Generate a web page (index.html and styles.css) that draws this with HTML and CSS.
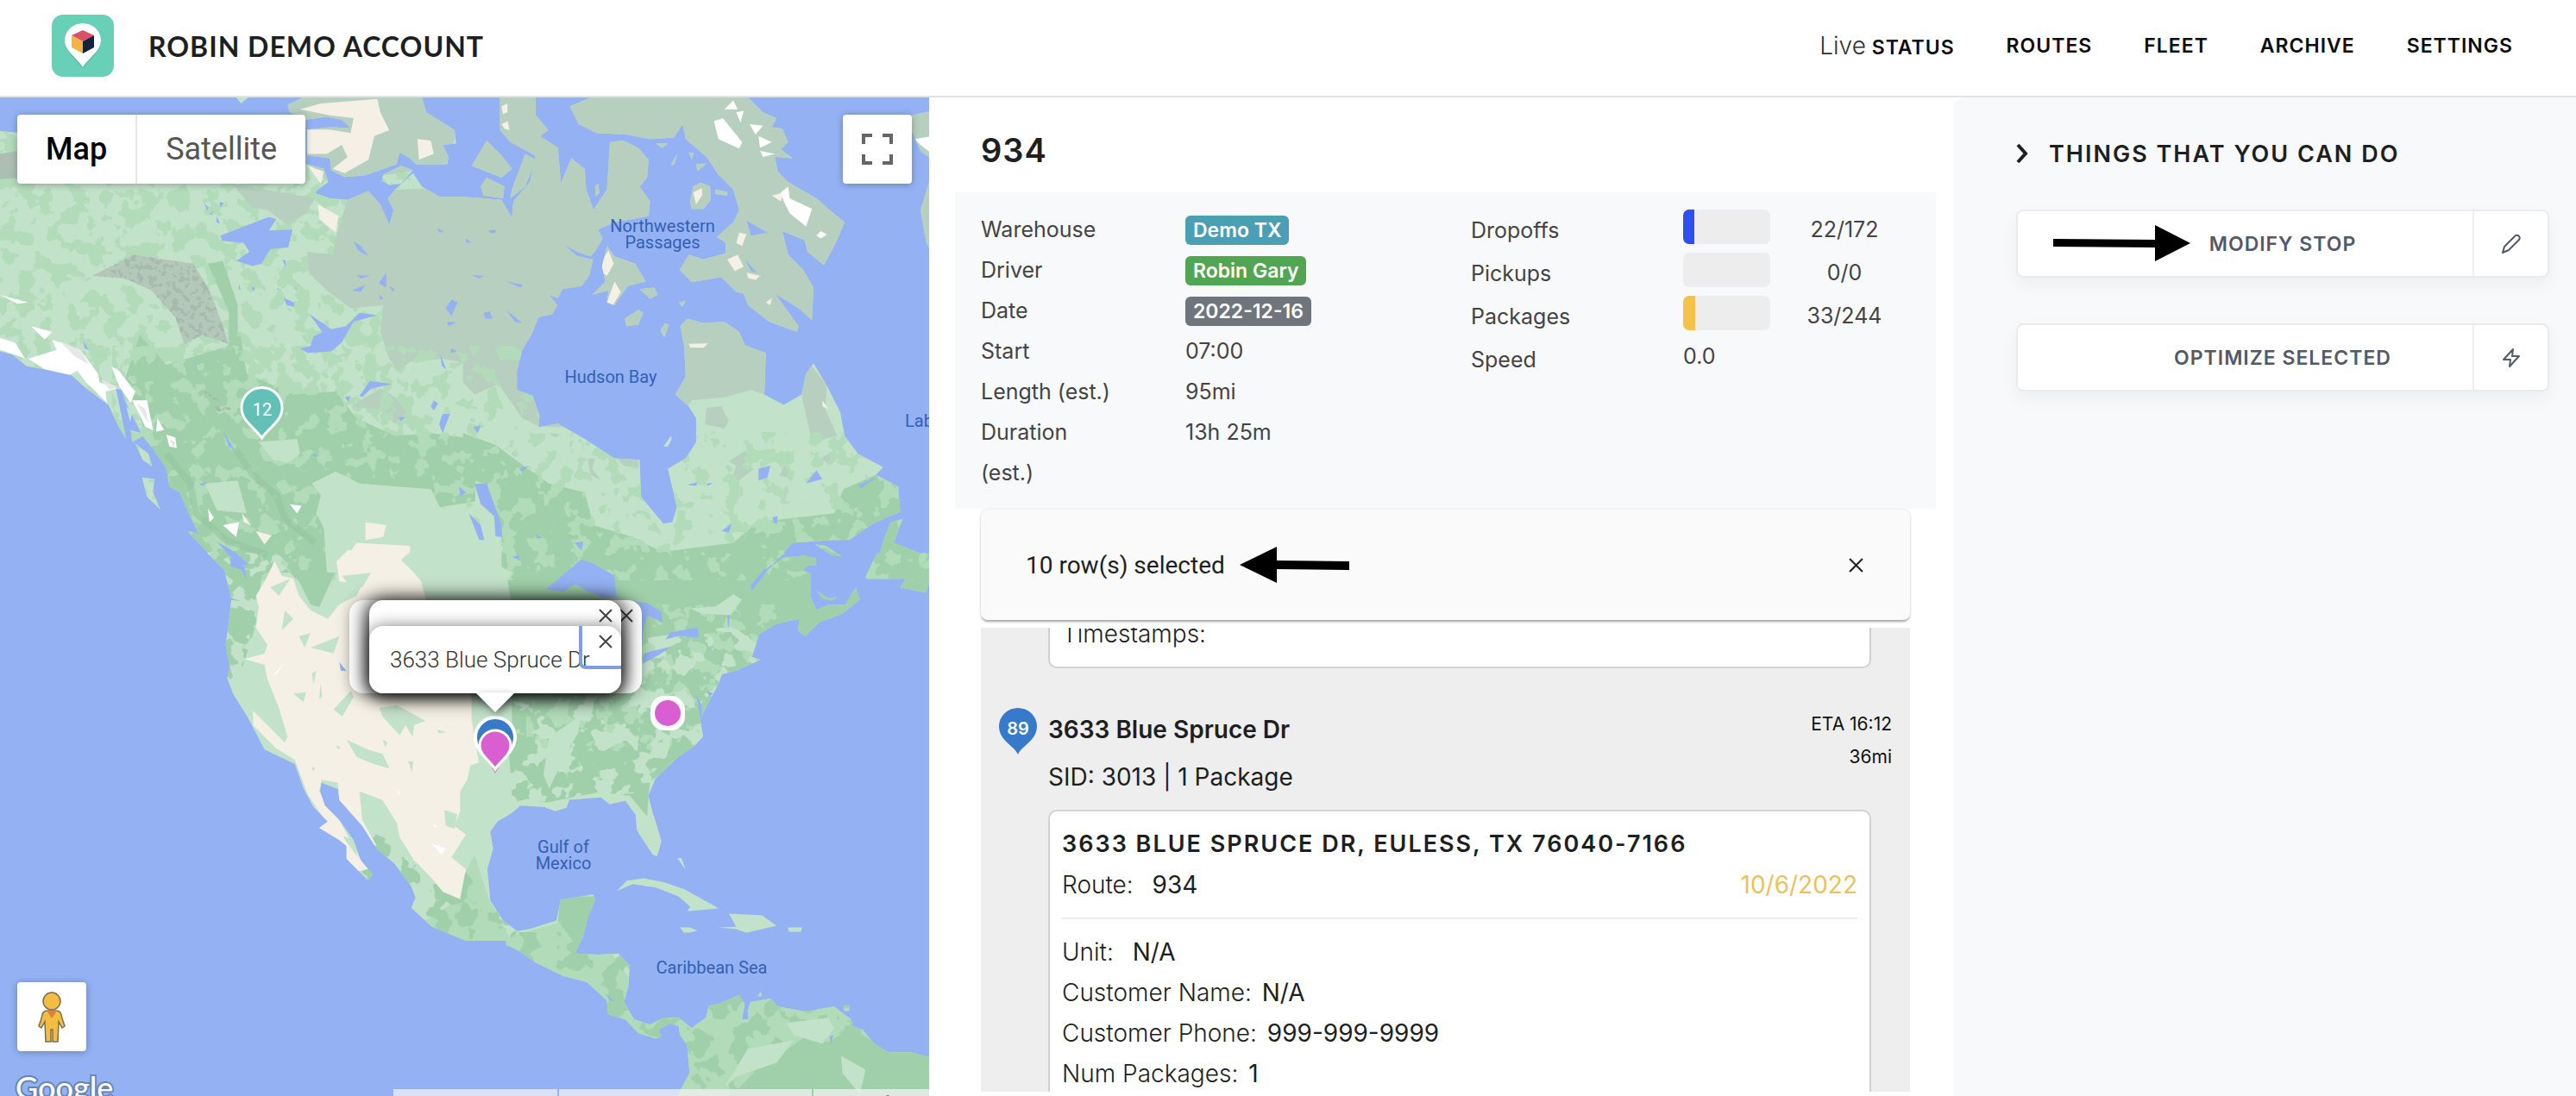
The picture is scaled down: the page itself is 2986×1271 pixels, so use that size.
FILE: index.html
```html
<!DOCTYPE html>
<html lang="en">
<head>
<meta charset="utf-8">
<title>Robin Demo Account</title>
<meta name="viewport" content="width=device-width, initial-scale=1">
<link rel="stylesheet" href="styles.css">
</head>
<body>
<header class="topbar">
  <a class="brand" href="#">
    <svg class="brand-logo" viewBox="0 0 72 72" aria-hidden="true">
      <rect width="72" height="72" rx="13" fill="#69d0b8"/>
      <path d="M36 63C30 53 15 43 15 30a21 20 0 0 1 42 0c0 13-15 23-21 33z" fill="#3f9c8a" opacity=".5"/>
      <path d="M36 61C30 51 15 42 15 30a21 20 0 0 1 42 0c0 12-15 21-21 31z" fill="#fff"/>
      <path d="M36 18l13 6-13 7-13-7z" fill="#db5069"/>
      <path d="M23 24l13 7v14l-13-7z" fill="#f2b544"/>
      <path d="M49 24l-13 7v14l13-7z" fill="#16233c"/>
    </svg>
    <span class="brand-name">ROBIN DEMO ACCOUNT</span>
  </a>
  <nav class="nav">
    <a href="#"><span class="nav-live">Live</span> STATUS</a>
    <a href="#">ROUTES</a>
    <a href="#">FLEET</a>
    <a href="#">ARCHIVE</a>
    <a href="#">SETTINGS</a>
  </nav>
</header>

<main class="layout">
  <section class="map" aria-label="Route map">
    <svg class="map-canvas" viewBox="0 112 1077 1159" preserveAspectRatio="xMinYMin slice">
      <defs>
        <filter id="speckLight" x="0" y="0" width="100%" height="100%" color-interpolation-filters="sRGB">
          <feTurbulence type="fractalNoise" baseFrequency=".045" numOctaves="3" seed="7"/>
          <feColorMatrix values="0 0 0 0 .765  0 0 0 0 .886  0 0 0 0 .792  30 0 0 0 -16.2"/>
          <feComposite in2="SourceGraphic" operator="in"/>
        </filter>
        <filter id="speckMid" x="0" y="0" width="100%" height="100%" color-interpolation-filters="sRGB">
          <feTurbulence type="fractalNoise" baseFrequency=".05" numOctaves="3" seed="21"/>
          <feColorMatrix values="0 0 0 0 .698  0 0 0 0 .859  0 0 0 0 .729  0 30 0 0 -15.6"/>
          <feComposite in2="SourceGraphic" operator="in"/>
        </filter>
        <filter id="speckSparse" x="0" y="0" width="100%" height="100%" color-interpolation-filters="sRGB">
          <feTurbulence type="fractalNoise" baseFrequency=".05" numOctaves="3" seed="5"/>
          <feColorMatrix values="0 0 0 0 .698  0 0 0 0 .859  0 0 0 0 .729  0 30 0 0 -17"/>
          <feComposite in2="SourceGraphic" operator="in"/>
        </filter>
        <filter id="speckDark" x="0" y="0" width="100%" height="100%" color-interpolation-filters="sRGB">
          <feTurbulence type="fractalNoise" baseFrequency=".04" numOctaves="3" seed="3"/>
          <feColorMatrix values="0 0 0 0 .627  0 0 0 0 .816  0 0 0 0 .667  0 0 30 0 -15.8"/>
          <feComposite in2="SourceGraphic" operator="in"/>
        </filter>
        <filter id="ridge" x="0" y="0" width="100%" height="100%" color-interpolation-filters="sRGB">
          <feTurbulence type="fractalNoise" baseFrequency=".05" numOctaves="2" seed="12"/>
          <feColorMatrix values="0 0 0 0 .65  0 0 0 0 .73  0 0 0 0 .68  0 20 0 0 -10.8"/>
          <feComposite in2="SourceGraphic" operator="in"/>
        </filter>
        <clipPath id="land">
          <path transform="translate(0 112) scale(.3444)" d="M0 113L500 160 1034 225 1090 240 1105 285 1070 310 1060 322 1110 340 1170 345 1240 315 1280 360 1310 430 1325 380 1305 340 1330 310 1390 255 1420 300 1480 335 1575 335V1575H830L740 1500 670 1470 635 1400 605 1330 570 1310 560 1250 520 1190 480 1140 440 1060 400 980 420 1050 430 1090 355 1028 290 980 240 935 150 915 90 905 40 865 0 855z"/>
          <path transform="translate(0 112) scale(.3444)" d="M968 25L1020 0H1420L1435 50 1530 110 1535 155 1490 160 1510 200 1505 225 1400 225 1380 205 1345 185 1335 225 1230 262 1160 268 1115 245 1110 205 1034 195V108L1110 100 1180 103 1150 75 1100 65 1030 75 975 50zM1285 280L1290 260 1350 230 1390 245 1350 290 1310 295zM478 1280L520 1285 515 1330 540 1388 495 1345zM630 1460L690 1475 740 1500 830 1575H740zM365 1035L410 1060 425 1150 400 1110zM425 1040L445 1060 435 1110zM440 1120L490 1135 445 1160zM455 1165L500 1200 512 1243 480 1220zM795 0H835L812 20z"/>
          <path transform="translate(540 112) scale(.3444)" d="M-10 335L60 340 120 345 155 405 160 350 215 285 235 195 310 170 320 290 355 205 400 240 405 310 430 378 475 310 485 150 530 145 580 170 615 210 610 270 585 300 620 350 615 400 500 420 445 445 460 475 440 510 420 535 375 520 330 495 375 535 428 545 415 600 390 635 325 645 310 675 280 665 308 700 290 730 245 740 220 800 190 850 172 920 172 985 225 1005 248 1070 245 1110 310 1098 400 1150 500 1215 585 1220 590 1345 665 1435 695 1430 710 1380 680 1250 740 1215 775 1160 775 1080 750 1040 705 1000 740 940 735 840 722 770 745 745 800 760 870 755 920 790 940 835 1010 860 1005 1000 1070 1035 1130 1000 1145 930 1170 895 1215 970 1260 1060 1275 1140 1320 1200 1405 1245 1380 1270 1455 1310 1462 1395 1370 1435 1290 1490 1230 1490 1100 1500 1030 1575H-10z"/>
          <path transform="translate(540 112) scale(.3444)" d="M350 30L420 0H950L1000 50 1045 70 1030 100 1065 105 1085 150 1060 175 1100 205 1040 200 1050 250 1085 285 1180 340 1220 375 1275 420 1245 490 1205 565 1150 520 1140 480 1065 450 1085 530 1135 580 1170 640 1165 750 1120 710 1040 660 1120 770 1115 790 1020 755 950 700 935 660 910 655 860 605 760 622 720 580 750 530 800 545 875 525 875 490 845 470 900 420 920 380 900 310 850 260 810 200 740 140 730 90 700 135 620 140 540 125 440 120 380 90z"/>
          <path transform="translate(540 112) scale(.3444)" d="M475 500L500 535 570 560 605 620 545 635 500 700 475 690 480 650 425 665 470 620 458 570zM585 645L635 640 645 665 620 678zM535 745L580 715 597 725 580 765 540 770zM655 785L670 760 683 765 668 808zM755 350L765 300 790 287 822 300 825 345 800 375 760 375zM115 0H235V60L278 110 250 130 310 170 240 200 150 150 115 110zM20 230L70 145 120 195 155 240 120 270zM50 300L70 270 130 300 125 340 60 330zM200 190L235 210 200 300 150 340 155 310zM435 300L445 290 450 320 437 335zM1500 110V60L1570 45V210L1530 180zM1530 380L1570 250V530L1550 490zM665 1175L690 1140 693 1150 680 1175zM717 690L740 685 728 705zM1380 1575L1410 1480 1430 1430 1470 1420 1440 1500 1530 1535V1575zM1175 1505L1210 1510 1265 1545 1230 1540zM1030 1575L1100 1545 1175 1550 1180 1575zM690 225L712 190 700 228zM775 225L810 222 780 248zM840 310L880 318V330L840 325zM640 155L680 155 660 170zM750 185L768 187 760 208z"/>
          <path transform="translate(180 640) scale(.33333)" d="M180 0L240 60 265 160 255 250 245 320 260 400 250 435 270 490 320 570 380 685 485 735 515 820 550 885 600 935 570 957 640 1000 665 1020V1065L740 1140 757 1120 715 1070 690 1000 640 930 590 880 573 830 578 800 635 822 640 860 720 950 770 1030 830 1080 890 1160 905 1200 890 1235 960 1300 1080 1350H1355V1300L1265 1320 1210 1280 1165 1210 1155 1100 1175 1030 1165 970 1190 935 1240 905 1270 880 1355 885V0z"/>
          <path transform="translate(600 640) scale(.33333 .4024)" d="M0 0V722L90 732 130 745 170 735 180 712 290 705 320 725 375 715 410 755 415 800 470 870 485 875 500 830 470 750 455 700 480 650 555 590 610 560 645 530 635 480 640 470 665 430 700 375 710 350 760 340 845 308 815 300 840 235 900 205 980 190 975 225 1000 240 1050 200 1130 175 1190 135 1175 100 1140 150 1080 150 1040 165 1020 130V60L990 50 1040 20 1000 8 920 15 870 50 810 110 860 50 930 0z"/>
          <path transform="translate(600 640) scale(.33333 .4024)" d="M0 1145L60 1180 160 1220 240 1237 310 1290 315 1330 375 1345 420 1385 480 1400 500 1395 490 1375 530 1355 560 1365 565 1390 590 1420 598 1500 550 1575H1440V1455L1370 1440 1290 1440 1240 1415 1200 1375 1165 1365 1160 1345 1100 1308 1000 1322 905 1308 880 1285 810 1295 800 1320 803 1345 780 1345 790 1300 770 1275 700 1300 665 1305 655 1340 605 1370 560 1340 510 1340 460 1360 405 1345 370 1295 385 1250 390 1190 350 1155 280 1158 200 1155 225 1110 245 1050 270 1000 262 985 150 1000 135 1060 40 1085 -40 1095V1130zM345 975L380 945 440 938 510 950 580 970 700 1025 590 1033 600 1020 560 990 480 965 400 955zM695 1080L760 1078 735 1040 850 1045 900 1075 795 1095 760 1085zM565 1080L600 1080 625 1090 580 1097zM940 1080H990L985 1092H943zM1210 70L1250 0H1440V60L1420 115 1330 100 1350 75 1215 75zM1040 110L1080 130 1110 128 1095 138 1060 132zM555 880L570 880 585 915zM1135 1305H1153V1320H1135zM835 1278L845 1265 850 1278z"/>
        </clipPath>
      </defs>

      <rect y="100" width="1077" height="1200" fill="#94b2f3"/>
      <g clip-path="url(#land)">
        <rect y="100" width="1077" height="1200" fill="#c3e2ca"/>
        <rect y="112" width="480" height="560" filter="url(#speckMid)"/>

        <!-- northern tundra -->
        <g transform="translate(0 112) scale(.3444)" fill="#b7cfbe">
          <path d="M1130 470L1170 345 1240 315 1600 300V900L1490 880 1380 890 1340 920 1310 880 1280 790 1290 700 1180 710 1100 650 1040 590 1035 520 1120 530zM780 290L1060 340 1030 390 970 430 900 380 850 370zM960 0H1440L1540 110 1500 230 1110 290 1020 200z"/>
          <path fill="#adbfb3" d="M0 190L60 180 80 270 0 275z"/>
          <path d="M1180 1040L1280 980 1330 1010 1370 1060 1330 1100 1280 1050z"/>
        </g>
        <path transform="translate(540 112) scale(.3444)" fill="#b7cfbe" d="M-10 0H1570V850H1010L1005 1000 960 985 870 1010 760 1020 700 1110 250 1110 190 1080 110 965 30 1000-10 960zM1130 1000L1145 880 1215 970 1210 1050 1250 1140 1165 1160z"/>
        <path transform="translate(540 112) scale(.3444)" fill="#b7cfbe" d="M810 1045L860 1040 885 1090 870 1115 805 1100zM885 1225L940 1190 960 1215 930 1240 970 1250 920 1290 900 1270 910 1240zM1070 1240L1100 1260 1095 1280 1055 1275zM1195 1215L1220 1200 1250 1215 1225 1240zM410 1215L435 1215 425 1250 455 1290 420 1270zM510 1215L580 1220 580 1248 530 1240zM280 1130L320 1135 300 1145z"/>

        <!-- boreal forest -->
        <g fill="#a0d0aa">
          <path transform="translate(0 112) scale(.3444)" d="M560 900L760 840 810 800 830 930 990 1000 1130 990 1200 1080 1330 1140 1450 1130 1600 1150V1360L1480 1380 1450 1320 1330 1310 1210 1300 1130 1260 1050 1300 1080 1340 1065 1400 1090 1450 1100 1600H700L600 1400 500 1150 420 950 470 800zM700 560L750 550 800 700 800 850 770 850 770 720z"/>
          <path transform="translate(540 112) scale(.3444)" d="M-10 1130L100 1170 180 1230 280 1300 400 1330 430 1440 560 1480 660 1530 900 1500 980 1430 1240 1400 1270 1320 1380 1270 1480 1300 1570 1450V1600H120V1460L60 1300-10 1280z"/>
          <path transform="translate(180 640) scale(.33333)" d="M170 0H640L620 80 570 190 540 180 500 100 430 30 370 80 350 250 300 410 260 440 230 400zM1210 0H1360V180H1240L1225 100 1250 60zM1240 830L1230 700 1300 640 1360 640V840L1260 865z"/>
          <path transform="translate(600 640) scale(.33333 .4024)" d="M-20 0H1440V330H850L700 420 650 540 460 660 450 760 390 700 280 690 100 720-20 700zM1440 1380V1600H700L900 1450 1000 1395 1160 1370z"/>
        </g>
        <path filter="url(#speckSparse)" d="M130 400H630V660H130z"/>
        <path filter="url(#speckSparse)" d="M560 500H1077V672H560z"/>
        <path filter="url(#speckMid)" d="M610 700H900V870H610z"/>
        <path filter="url(#speckLight)" d="M560 750L740 740 890 720V900L560 940z"/>
        <path filter="url(#speckLight)" d="M170 640H340V900H170z"/>
        <path fill="#b2dbba" d="M470 1080L520 1050 550 990 566 1040 590 1085 680 1060 740 1150 860 1210V1290H470z"/>
        <path fill="#b2dbba" d="M790 1140H1077V1290H780z"/>
        <path filter="url(#speckDark)" d="M420 960L540 1010 600 1080H1077V1271H480L400 1010z"/>
        <path transform="translate(600 640) scale(.33333 .4024)" fill="#a0d0aa" d="M150 990H280L220 1150 140 1060z"/>
        <path transform="translate(600 640) scale(.33333 .4024)" fill="#a0d0aa" d="M700 1600L820 1500 1000 1395 1080 1410 1160 1370 1300 1440H1440V1600z"/>
        <path transform="translate(600 640) scale(.33333 .4024)" fill="#c3e2ca" d="M720 1540L800 1430 960 1405 900 1470 760 1510zM935 1355L1080 1340 1100 1370 1060 1415 960 1390zM1125 1450L1210 1490 1190 1560 1130 1500zM410 755L480 760 500 850 480 880 420 810zM600 160L690 155 750 120 780 135 740 180 640 175zM110 530L220 470 210 520 160 590 110 680 90 640z"/>

        <!-- mountains -->
        <path transform="translate(0 112) scale(.3444)" fill="#b3c8b9" d="M310 600L450 530 650 560 700 640 740 740 770 830 680 800 620 830 590 740 510 650 420 610z"/>
        <path transform="translate(0 112) scale(.3444)" filter="url(#ridge)" d="M310 600L450 530 650 560 700 640 740 740 770 830 680 800 620 830 590 740 510 650 420 610zM680 980L780 1050 740 1070z"/>
        <path transform="translate(0 112) scale(.3444)" fill="none" stroke="#93c49f" stroke-width="22" opacity=".6" d="M790 1180L850 1270 930 1340 960 1420 1060 1500M560 1200L640 1300 660 1400 760 1490 900 1540"/>

        <!-- prairie -->
        <path transform="translate(0 112) scale(.3444)" fill="#c3e2ca" d="M1050 1300L1130 1260 1210 1300 1330 1310 1450 1320 1480 1380 1568 1410 1660 1460 1690 1520 1670 1600H1100L1090 1450 1065 1400 1080 1340zM870 1160L1000 1150 1010 1200 970 1230 920 1220zM690 1300L800 1290 830 1400 730 1390z"/>
        <path transform="translate(180 640) scale(.33333)" fill="#c3e2ca" d="M780-20H1210L1190 40 1240 70 1200 140H900z"/>

        <!-- desert -->
        <g fill="#f4f0e5">
          <path transform="translate(180 640) scale(.33333)" d="M415 30L440 80 480 90 500 150 540 200 600 230 640 180 700 150 720 110 640 100 630 30 670-10 780-10 850 20 900 70 925 100 950 200 1100 500 1100 580 1125 730 1095 740 1085 790 1060 830 1060 900 1040 950 1080 980 1030 1060 1080 1100 1060 1205 1000 1180 960 1130 900 1070 850 990 840 940 790 860 710 830 720 930 770 1020 740 1010 640 870 635 800 578 790 570 830 640 930 715 1070 740 1100 700 1110 640 1030 560 970 590 930 530 840 485 720 420 680 340 600 340 550 400 610 450 660 460 640 430 540 390 440 380 390 310 370 380 350 390 320 350 260 360 190 350 150 380 100z"/>
          <path transform="translate(0 112) scale(.3444)" d="M1230 1430L1300 1440 1290 1480 1230 1490zM1150 1575L1200 1500 1380 1510 1380 1530 1330 1575zM860 1460L915 1475 890 1505zM815 1400L845 1440 820 1430zM1010 40L1080 20 1270 5 1280 50 1310 110 1260 130 1240 210 1160 255 1120 240 1170 200 1150 160 1100 190H1030V108H1110L1180 120 1190 70 1110 60zM1070 360L1140 400 1130 455 1075 410zM1035 230L1090 250 1080 290zM1405 140L1450 145 1460 190 1410 210z"/>
          <path transform="translate(540 112) scale(.3444)" d="M460 590L458 550 480 515 498 560 475 600zM475 690L500 620 522 655 495 700zM765 320L795 305 795 330 775 360zM880 545L915 530 935 570 905 585zM910 490L920 455 945 460 930 500zM945 590L990 600 975 615 950 608zM1010 690L1030 675 1025 700zM750 830L815 828 800 843 755 842zM1030 330L1070 320 1060 350zM120 30L140 20V50L125 55zM120 90L140 80 148 110 130 105zM1200 1020L1220 1050 1200 1040z"/>
        </g>
        <path transform="translate(180 640) scale(.33333)" fill="#c3e2ca" d="M665 650L740 685 790 700 815 750 760 735 700 710zM780 540L840 530 940 585 900 600 895 640 870 600 850 635 790 570zM480 490L525 485 515 520zM545 420L560 410 550 460zM575 455L580 500 570 510zM620 545L680 480 690 500 650 570zM880 725H897L893 765zM1005 895L1050 910 1040 960 1010 950zM400 120L470 90 430 150zM450 200L480 230 440 270zM500 290L540 280 520 330zM540 330L640 290 620 350zM650 80L750 70 720 120 670 110zM980 615L1015 625 985 628zM790 650L808 660 800 675zM545 745L557 750 548 760zM630 670L645 678 635 685zM655 985L685 1000 705 1060 660 1000z"/>

        <!-- snow -->
        <g transform="translate(0 112) scale(.3444)" fill="#fff">
          <path d="M95 880L190 850 175 815 270 850 330 930 335 960 395 980 355 990 360 1028 290 960 260 920 230 938 150 915zM0 810L50 825 85 880 60 870 0 850zM105 770L175 790 150 815zM375 905L400 920 455 990 440 1030 400 970zM445 1020L495 1020 515 1120 490 1110zM560 1135L590 1145 595 1180 570 1175zM530 1080L552 1120 525 1125zM0 665L95 690 60 695zM750 1440L805 1430 795 1480zM700 1385L720 1415 705 1430zM975 1370L1015 1375 1000 1400z"/>
          <path fill="#e6e8e7" d="M200 820L270 850 300 900 250 870zM340 950L395 975 370 985zM460 1030L490 1050 500 1100zM570 1150L590 1160 585 1180z"/>
        </g>
        <g transform="translate(540 112) scale(.3444)" fill="#fff">
          <path d="M835 80L865 70 930 150 920 172 850 140zM1070 350L1060 320 1085 300 1090 340 1165 375 1145 435 1090 390zM870 40L900 10 915 40zM910 50L935 45 925 85zM955 90L1000 95 975 125zM985 130L1030 150 990 170zM990 180L1040 190 1000 200zM1180 465L1195 450 1215 462 1195 475zM1510 140L1570 130V190L1530 160z"/>
        </g>
        <path transform="translate(180 640) scale(.33333)" fill="#fff" d="M445 388L425 418 405 432zM840 818L852 842 845 840zM960 1010L1010 1030 995 1050zM968 945L982 950 972 955z"/>
      </g>

      <!-- lakes and inlets -->
      <g fill="#94b2f3">
        <path transform="translate(0 112) scale(.3444)" d="M742 465L905 402 930 410 905 448 985 445 970 505 910 510 880 560 850 568 795 550 840 520 820 490 748 483zM1040 728L1115 780 1165 770 1210 725 1270 733 1190 755 1150 825 1115 855 1035 860 1010 845 1045 838 1055 805 1085 790zM1210 1005L1245 955 1320 965 1250 980 1220 1008zM955 675L990 690 990 705 965 700zM1500 710L1520 680 1540 690 1520 735zM1505 755L1535 757 1510 770zM685 355L702 370 698 380zM738 352L754 355 742 370zM705 395L718 380 712 395zM730 400L740 425 728 420zM1190 485L1215 500 1240 535 1205 515zM1200 598L1245 600 1215 610zM1275 625L1300 590 1300 640zM1185 650L1230 630 1215 655zM850 635L860 648H848zM805 630L810 648 803 645zM935 640L940 647H932zM1310 635L1328 645 1322 655zM1275 665L1290 675 1280 683zM950 545L962 550 960 570zM990 640L1003 645H993zM1470 440L1495 450 1480 455zM1460 1020L1475 1030 1460 1055 1450 1040zM1490 1065L1515 1065 1490 1130 1478 1100zM1340 1078L1365 1075 1350 1090zM1160 1010L1180 1005 1172 1025zM750 1120L790 1188 770 1175zM1045 1200L1080 1205 1060 1208zM1480 860L1502 915 1488 905zM1520 845L1538 855 1515 860zM655 880L665 940 658 910zM670 1300L700 1298 680 1308zM1545 1310L1568 1330 1550 1345zM390 980L410 985 440 1100 425 1150zM280 820L300 850 285 845zM730 1495L790 1530 840 1575 800 1575z"/>
        <path transform="translate(540 112) scale(.3444)" d="M30 1300L70 1300 120 1440 122 1480 100 1478 95 1410 50 1370zM10 1400L50 1440 62 1490 45 1490zM135 620L190 630 185 640zM20 598L62 600 45 610zM60 725L80 720 90 745 65 745zM75 448L102 445 100 455 85 458zM135 715L190 760 165 755zM0 475L20 490 0 488zM745 1305L780 1295 775 1308zM985 1250L1025 1240 1015 1280 985 1290zM1145 1300L1180 1255 1200 1285zM860 1460L895 1435 885 1465zM1030 1415L1050 1410 1045 1440zM365 1500L395 1495 390 1525zM180 1250L210 1240 190 1262zM25 1110L50 1105 40 1130zM945 415L1015 455 960 465zM940 545L980 590 960 585zM235 1470L258 1482 240 1485zM810 1300L832 1298 815 1308zM1320 1305L1390 1275 1330 1315z"/>
        <path transform="translate(600 640) scale(.33333 .4024)" d="M100 105L220 20 260 30 335 65 345 130H300L240 110 200 90 160 112zM360 135L450 145 500 170 505 200 450 180 435 230 430 290 360 260zM435 320L440 290 460 285 535 270 490 295zM515 250L530 230 625 215 630 245 560 240zM730 180L738 180 732 225zM620 405L640 440 638 490 628 440zM660 398L680 405 668 415zM305 1270L340 1295 320 1290zM1085 1395L1098 1390 1090 1415zM810 95L815 110 870 50 860 45z"/>
        <path transform="translate(180 640) scale(.33333)" d="M640 380L665 412 645 410zM1240 15L1265 8 1265 25zM265 15L310 50 318 95 300 60 260 45zM263 158L300 168 263 164z"/>
      </g>

      <g class="sea-names">
        <text x="768" y="268">Northwestern</text>
        <text x="768" y="287">Passages</text>
        <text x="708" y="443">Hudson Bay</text>
        <text x="1108" y="494">Labrador Sea</text>
        <text x="653" y="988">Gulf of</text>
        <text x="653" y="1007">Mexico</text>
        <text x="825" y="1128">Caribbean Sea</text>
      </g>

      <g>
        <path d="M303.500 507C297 496 280 488 280 472a23.500 23.500 0 0 1 47 0c0 16-17 24-23.500 35z" fill="#62c0b7" stroke="#fff" stroke-width="3"/>
        <text class="pin-number" x="304" y="481">12</text>
        <path d="M574 890C567 879 551 870 551 854a23 23 0 0 1 46 0c0 16-16 25-23 36z" fill="#367ac9" stroke="#fff" stroke-width="4"/>
        <path d="M570 889h8l-4 7z" fill="#d082c8"/>
        <path d="M574 891C569 882 556 875 556 864a18 18 0 0 1 36 0c0 11-13 18-18 27z" fill="#d95fd0" stroke="#fff" stroke-width="3"/>
        <rect x="754" y="806" width="40" height="40" rx="16" fill="#fff"/>
        <circle cx="774" cy="826" r="15" fill="#d95fd0"/>
      </g>
      <g class="google-mark"><text x="18" y="1274">Google</text></g>
    </svg>

    <div class="info-window info-back">
      <button class="info-close" aria-label="Close"><svg viewBox="0 0 16 16"><path d="M1 1l14 14M15 1L1 15"/></svg></button>
    </div>
    <div class="info-window info-middle">
      <span class="info-text">12711 Skinnker S</span>
      <button class="info-close" aria-label="Close"><svg viewBox="0 0 16 16"><path d="M1 1l14 14M15 1L1 15"/></svg></button>
    </div>
    <div class="info-window info-front">
      <span class="info-text">3633 Blue Spruce Dr</span>
      <button class="info-close focused" aria-label="Close"><svg viewBox="0 0 16 16"><path d="M1 1l14 14M15 1L1 15"/></svg></button>
    </div>
    <svg class="info-tail" viewBox="0 0 46 23" aria-hidden="true"><path d="M0 0h46L23 23z" fill="#fff"/></svg>

    <div class="map-types">
      <button class="map-type active">Map</button>
      <button class="map-type">Satellite</button>
    </div>
    <button class="map-square fullscreen" aria-label="Toggle fullscreen">
      <svg viewBox="0 0 36 36" width="36" height="36"><path d="M2 12V2h10M24 2h10v10M34 24v10H24M12 34H2V24" fill="none" stroke="#666" stroke-width="4"/></svg>
    </button>
    <button class="map-square pegman" aria-label="Street View">
      <svg viewBox="0 0 34 60" width="34" height="60"><path d="M12 23h10c5 0 6 3 7 9l3 9-3 2-4-7-1 23h-6V45h-2v14h-6L9 36l-4 7-3-2 3-9c1-6 2-9 7-9z" fill="#f3bd42" stroke="#7a6f50" stroke-width="1.500"/><path d="M11 23h12l-6 9z" fill="#d9823a"/><circle cx="17" cy="12" r="10" fill="#f3bd42" stroke="#7a6f50" stroke-width="1.500"/></svg>
    </button>
    <div class="attribution">
      <span class="attribution-keys">Keyboard shortcuts</span>
      <span class="attribution-data">Map data ©2022 Google, INEGI</span>
      <span class="attribution-terms">Terms of Use</span>
    </div>
  </section>

  <section class="route">
    <h1 class="route-title">934</h1>
    <div class="summary">
      <dl class="facts">
        <dt>Warehouse</dt><dd><span class="tag tag-blue">Demo TX</span></dd>
        <dt>Driver</dt><dd><span class="tag tag-green">Robin Gary</span></dd>
        <dt>Date</dt><dd><span class="tag tag-grey">2022-12-16</span></dd>
        <dt>Start</dt><dd>07:00</dd>
        <dt>Length (est.)</dt><dd>95mi</dd>
        <dt>Duration (est.)</dt><dd>13h 25m</dd>
      </dl>
      <dl class="counts">
        <dt>Dropoffs</dt><dd><span class="bar"><span class="fill fill-blue" style="width:13%"></span></span><span class="count">22/172</span></dd>
        <dt>Pickups</dt><dd><span class="bar"></span><span class="count">0/0</span></dd>
        <dt>Packages</dt><dd><span class="bar"><span class="fill fill-yellow" style="width:14%"></span></span><span class="count">33/244</span></dd>
        <dt>Speed</dt><dd>0.0</dd>
      </dl>
    </div>

    <div class="selection">
      <span>10 row(s) selected</span>
      <svg class="selection-arrow" viewBox="0 0 127 42" aria-hidden="true"><path d="M0 21L43 0v16l84 1v10l-84-1v16z"/></svg>
      <button class="selection-close" aria-label="Clear selection"><svg viewBox="0 0 16 16"><path d="M1 1l14 14M15 1L1 15"/></svg></button>
    </div>

    <div class="stops">
      <div class="card card-above"><p class="field">Timestamps:</p></div>
      <div class="stop">
        <svg class="stop-pin" viewBox="0 0 44 54" role="img" aria-label="Stop 89"><path d="M22 54C17 43 0 38 0 21a22 21 0 0 1 44 0c0 17-17 22-22 33z" fill="#367ac9"/><text x="22" y="31">89</text></svg>
        <div class="stop-head">
          <h2 class="stop-name">3633 Blue Spruce Dr</h2>
          <p class="stop-sub">SID: 3013 | 1 Package</p>
        </div>
        <div class="stop-eta"><p>ETA 16:12</p><p>36mi</p></div>
      </div>
      <div class="card">
        <h3 class="card-title">3633 BLUE SPRUCE DR, EULESS, TX 76040-7166</h3>
        <p class="field field-route"><span>Route: <b>934</b></span><time>10/6/2022</time></p>
        <p class="field">Unit: <b>N/A</b></p>
        <p class="field">Customer Name: <b class="near">N/A</b></p>
        <p class="field">Customer Phone: <b class="near">999-999-9999</b></p>
        <p class="field">Num Packages: <b class="near">1</b></p>
      </div>
    </div>
  </section>

  <aside class="actions">
    <h2 class="actions-title"><svg viewBox="0 0 14 24" aria-hidden="true"><path d="M2 2l9 10-9 10"/></svg>THINGS THAT YOU CAN DO</h2>
    <button class="action">
      <svg class="action-arrow" viewBox="0 0 159 42" aria-hidden="true"><path d="M159 21L118 42V26L0 25V16l118 1V0z"/></svg>
      <span class="action-label">MODIFY STOP</span>
      <span class="action-icon"><svg viewBox="0 0 24 24"><path d="M2 22l2-7L16 3a3 3 0 0 1 5 4L9 19z"/></svg></span>
    </button>
    <button class="action">
      <span class="action-label">OPTIMIZE SELECTED</span>
      <span class="action-icon"><svg viewBox="0 0 24 24"><path d="M14 2L3 14h8l-1 8 11-12h-8z"/></svg></span>
    </button>
  </aside>
</main>
</body>
</html>
```

FILE: styles.css
```css
* { box-sizing: border-box; }

body {
  margin: 0;
  height: 100vh;
  display: flex;
  flex-direction: column;
  overflow: hidden;
  background: #fff;
  color: #1e1f21;
  font-family: Inter, "Open Sans", sans-serif;
  font-size: 25px;
}

h1, h2, h3, p, dl, dd { margin: 0; }
button { font: inherit; color: inherit; border: 0; background: none; padding: 0; cursor: pointer; }
a { color: inherit; text-decoration: none; }

/* Top bar */
.topbar {
  display: flex;
  align-items: center;
  justify-content: space-between;
  height: 113px;
  flex: none;
  padding: 0 73px 5px 60px;
  border-bottom: 2px solid #e1e4e6;
}
.brand { display: flex; align-items: center; gap: 40px; }
.brand-logo { width: 72px; height: 72px; }
.brand-name { font-family: Lato, sans-serif; font-weight: 700; font-size: 32px; letter-spacing: 1px; }
.nav { display: flex; align-items: center; gap: 60px; font-size: 23px; font-weight: 600; letter-spacing: 1px; color: #0c0c0d; }
.nav-live { font-weight: 300; font-size: 28px; letter-spacing: 0; color: #333; }

.layout {
  flex: 1;
  min-height: 0;
  display: grid;
  grid-template-columns: 1077fr 1188fr 721fr;
}

/* Map */
.map { position: relative; overflow: hidden; background: #94b2f3; font-family: Roboto, sans-serif; }
.map-canvas { display: block; width: 100%; height: 100%; }
.sea-names text { font: 20px Roboto, sans-serif; fill: #3360b5; text-anchor: middle; }
.pin-number { font: 20px Roboto, sans-serif; fill: #fff; text-anchor: middle; }
.google-mark text {
  font: 500 36px Lato, sans-serif;
  fill: #fff;
  stroke: #6784b8;
  stroke-width: 4px;
  paint-order: stroke;
}
.map-types {
  position: absolute;
  left: 20px;
  top: 20px;
  display: flex;
  height: 80px;
  border-radius: 4px;
  background: #fff;
  box-shadow: 0 1px 8px rgba(0, 0, 0, .3);
}
.map-type { padding: 0 33px; font-size: 36px; color: #565656; }
.map-type.active { font-weight: 500; color: #000; border-right: 2px solid #e8e8e8; }
.map-square {
  position: absolute;
  display: flex;
  align-items: center;
  justify-content: center;
  width: 80px;
  height: 80px;
  border-radius: 4px;
  background: #fff;
  box-shadow: 0 1px 8px rgba(0, 0, 0, .3);
}
.fullscreen { right: 20px; top: 20px; }
.pegman { left: 20px; bottom: 52px; }

.info-window {
  position: absolute;
  display: flex;
  align-items: center;
  border-radius: 16px;
  background: #fff;
  overflow: hidden;
  padding-left: 24px;
  font-weight: 300;
  font-size: 26px;
  color: #333;
}
.info-back { left: 405px; top: 583px; width: 339px; height: 108px; box-shadow: 0 2px 16px rgba(0, 0, 0, .3); }
.info-middle { left: 428px; top: 583px; width: 292px; height: 108px; box-shadow: 0 2px 22px 3px #000; }
.info-middle .info-text { padding-bottom: 22px; }
.info-front { left: 428px; top: 613px; width: 292px; height: 78px; box-shadow: 0 0 18px rgba(0, 0, 0, .5); }
.info-tail { position: absolute; left: 551px; top: 690px; width: 46px; height: 23px; filter: drop-shadow(2px 3px 4px rgba(0, 0, 0, .4)); }
.info-close {
  position: absolute;
  right: 0;
  top: 0;
  width: 49px;
  height: 50px;
  padding: 10px 10px 0 23px;
  display: flex;
}
.info-close svg { width: 16px; height: 16px; fill: none; stroke: #444; stroke-width: 2; }
.info-close.focused { border: 3px solid #7f9fdc; border-width: 0 0 4px 4px; border-radius: 0 0 0 8px; padding-left: 19px; }

.attribution { position: absolute; right: 0; bottom: -20px; display: flex; gap: 2px; font-size: 20px; color: #222; }
.attribution span { height: 28px; padding: 4px 8px; background: rgba(245, 245, 245, .7); white-space: nowrap; }

/* Route column */
.route { display: flex; flex-direction: column; min-width: 0; min-height: 0; padding: 0 21px 5px 30px; }
.route-title { padding: 36px 30px 0; height: 110px; font-size: 38px; font-weight: 600; line-height: 50px; letter-spacing: 1px; }
.summary {
  display: grid;
  grid-template-columns: minmax(0, 568fr) minmax(0, 509fr);
  padding: 20px 30px 18px;
  background: #f8f9fb;
  color: #444;
}
.facts { display: grid; grid-template-columns: 237px 1fr; line-height: 47px; }
.facts dt { padding-right: 70px; }
.facts dd, .counts dd { display: flex; align-items: center; }
.facts dd { align-self: start; height: 47px; }
.tag { padding: 0 9px; line-height: 34px; border-radius: 6px; color: #fff; font-size: 23px; font-weight: 600; }
.tag-blue { background: #4a9fb5; }
.tag-green { background: #52a552; }
.tag-grey { background: #6e757d; }
.counts { display: grid; grid-template-columns: 246px 1fr; grid-auto-rows: 40px; row-gap: 10px; align-content: start; line-height: 48px; }
.counts dd { line-height: 40px; }
.bar { display: flex; flex: none; width: 101px; height: 40px; border-radius: 7px; background: #ededed; overflow: hidden; }
.fill-blue { background: #2f50ee; }
.fill-yellow { background: #f5c24a; }
.count { flex: none; width: 172px; padding-top: 6px; text-align: center; }

.selection {
  position: relative;
  display: flex;
  align-items: center;
  flex: none;
  height: 128px;
  margin: 1px 30px 9px;
  padding: 0 54px 0 52px;
  border-radius: 8px;
  background: #fafafa;
  box-shadow: 0 3px 3px -1px rgba(0, 0, 0, .35), 0 0 3px rgba(0, 0, 0, .15);
  font-family: Roboto, sans-serif;
  font-size: 28px;
}
.selection-arrow { width: 127px; height: 42px; margin-left: 17px; }
.selection-close { margin-left: auto; display: flex; }
.selection-close svg { width: 17px; height: 17px; fill: none; stroke: #222; stroke-width: 2; }

.stops { flex: 1; min-height: 0; overflow: hidden; margin: 0 30px; padding: 0 21px; background: #eee; }
.card {
  margin: 0 24px 0 57px;
  padding: 14px 14px;
  border: 2px solid #d2d2d2;
  border-radius: 10px;
  background: #fff;
}
.card-above { margin-top: -32px; }
.stop { display: flex; padding: 46px 0 12px; height: 164px; }
.stop-pin { width: 44px; height: 54px; flex: none; margin-right: 13px; }
.stop-pin text { font: 600 20px Inter, sans-serif; fill: #fff; text-anchor: middle; }
.stop-head { flex: 1; }
.stop-name { font-size: 28px; font-weight: 600; line-height: 50px; }
.stop-sub { font-size: 28px; line-height: 60px; }
.stop-eta { font-size: 21px; line-height: 38px; text-align: right; color: #111; }
.card-title { font-size: 27px; font-weight: 600; line-height: 48px; letter-spacing: 2px; }
.field { font-size: 28px; font-weight: 300; line-height: 47px; }
.field b { font-weight: 400; margin-left: 14px; }
.field b.near { margin-left: 4px; }
.field-route {
  display: flex;
  justify-content: space-between;
  height: 63px;
  margin-bottom: 15px;
  border-bottom: 2px solid #ececec;
}
.field-route time { color: #e9c25c; font-weight: 400; }

/* Actions column */
.actions { padding: 40px 31px 0 72px; border-radius: 12px 0 0 0; background: #f8f9fb; }
.actions-title { display: flex; align-items: center; gap: 24px; height: 50px; font-size: 27px; font-weight: 600; letter-spacing: 2px; }
.actions-title svg { width: 14px; height: 24px; fill: none; stroke: #1e1f21; stroke-width: 4; }
.action {
  position: relative;
  display: flex;
  width: 100%;
  height: 79px;
  margin: 40px 0 53px;
  border: 2px solid #ebebeb;
  border-radius: 8px;
  background: #fff;
  box-shadow: 0 8px 20px rgba(0, 0, 0, .05);
  color: #535966;
}
.action-label { flex: 1; align-self: center; padding-left: 87px; font-size: 23px; font-weight: 600; letter-spacing: 1px; }
.action-icon { display: flex; align-items: center; justify-content: center; width: 87px; height: 100%; border-left: 2px solid #efefef; }
.action-icon svg { width: 24px; height: 24px; fill: none; stroke: #535966; stroke-width: 2; stroke-linejoin: round; }
.action-arrow { position: absolute; left: 41px; top: 16px; width: 159px; height: 42px; }
```
